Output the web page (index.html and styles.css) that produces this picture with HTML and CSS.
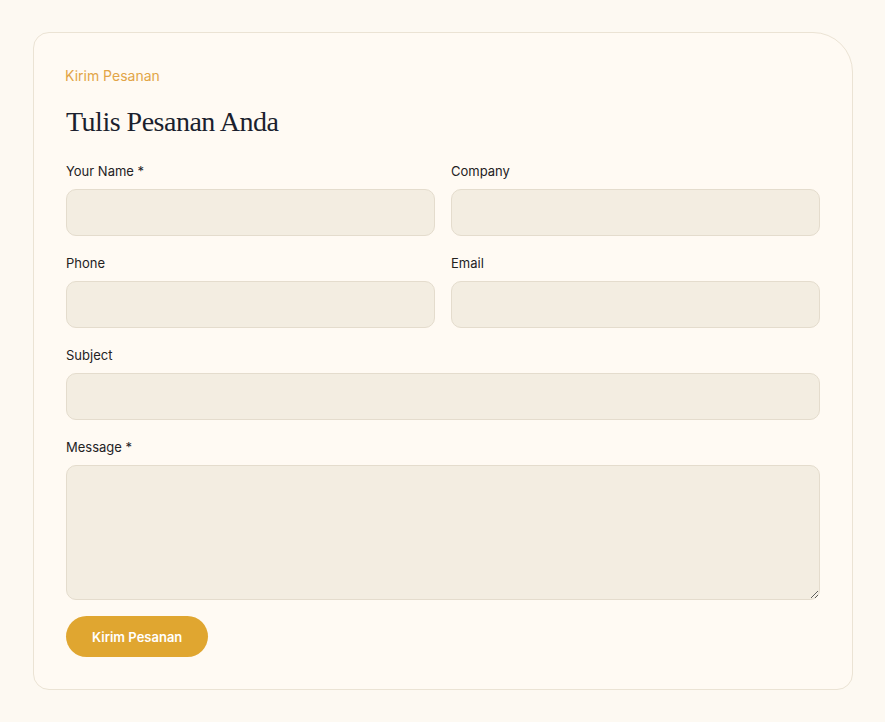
FILE: index.html
```html
<!DOCTYPE html>
<html lang="id">
	<head>
		<meta charset="UTF-8" />
		<meta name="viewport" content="width=device-width, initial-scale=1.0" />
		<title>Kirim Pesanan</title>
		<link rel="stylesheet" href="styles.css">
	</head>
	<body>
		<div class="form-card">
			<div class="eyebrow">Kirim Pesanan</div>
			<h2 class="form-title">Tulis Pesanan Anda</h2>

			<form class="order-form" onsubmit="return false">
				<div class="field">
					<label class="field-label" for="name">Your Name *</label>
					<input class="field-input" type="text" id="name" />
				</div>
				<div class="field">
					<label class="field-label" for="company">Company</label>
					<input class="field-input" type="text" id="company" />
				</div>
				<div class="field">
					<label class="field-label" for="phone">Phone</label>
					<input class="field-input" type="tel" id="phone" />
				</div>
				<div class="field">
					<label class="field-label" for="email">Email</label>
					<input class="field-input" type="email" id="email" />
				</div>
				<div class="field field-wide">
					<label class="field-label" for="subject">Subject</label>
					<input class="field-input" type="text" id="subject" />
				</div>
				<div class="field field-wide">
					<label class="field-label" for="message">Message *</label>
					<textarea class="field-input field-textarea" id="message"></textarea>
				</div>
				<div class="field-wide">
					<button class="submit-btn" type="submit">Kirim Pesanan</button>
				</div>
			</form>
		</div>
	</body>
</html>
```

FILE: styles.css
```css
body {
	font-family: Inter, 'Noto Sans', sans-serif;
	margin: 0;
	padding: 32px 32px 32px 33px;
	background-color: #fdf9f2;
	color: #222;
	font-size: 14px;
}

.form-card {
	width: 754px;
	background-color: #fffaf3;
	border: 1px solid #ebe3d4;
	border-radius: 16px 40px 16px 16px;
	padding: 32px;
}

.eyebrow {
	color: #e2a547;
	font-size: 14px;
	line-height: 20px;
	margin: 1px 0 19px -1px;
}

.form-title {
	font-family: 'Liberation Serif', 'DejaVu Serif', serif;
	font-weight: normal;
	font-size: 28px;
	line-height: 34px;
	letter-spacing: -0.5px;
	color: #1b1f2e;
	margin: 0 0 21px 0;
}

.order-form {
	display: grid;
	grid-template-columns: 1fr 1fr;
	column-gap: 16px;
	row-gap: 16px;
}

.field {
	display: flex;
	flex-direction: column;
}

.field-wide {
	grid-column: 1 / -1;
}

.field-label {
	font-size: 13px;
	line-height: 21px;
	color: #24221f;
	margin: 1px 0 7px 0;
}

.field-input {
	box-sizing: border-box;
	height: 47px;
	width: 100%;
	background-color: #f3ede1;
	border: 1px solid #e4dccd;
	border-radius: 10px;
	padding: 12px 14px;
	font-family: inherit;
	font-size: 14px;
	outline: none;
}

.field-textarea {
	height: 135px;
	resize: vertical;
	display: block;
}

.submit-btn {
	height: 41px;
	padding: 0 26px;
	background-color: #e0a630;
	color: white;
	border: none;
	border-radius: 21px;
	font-family: inherit;
	font-size: 13px;
	font-weight: 600;
	cursor: pointer;
}

.submit-btn:hover {
	background-color: #d0961f;
}
```
